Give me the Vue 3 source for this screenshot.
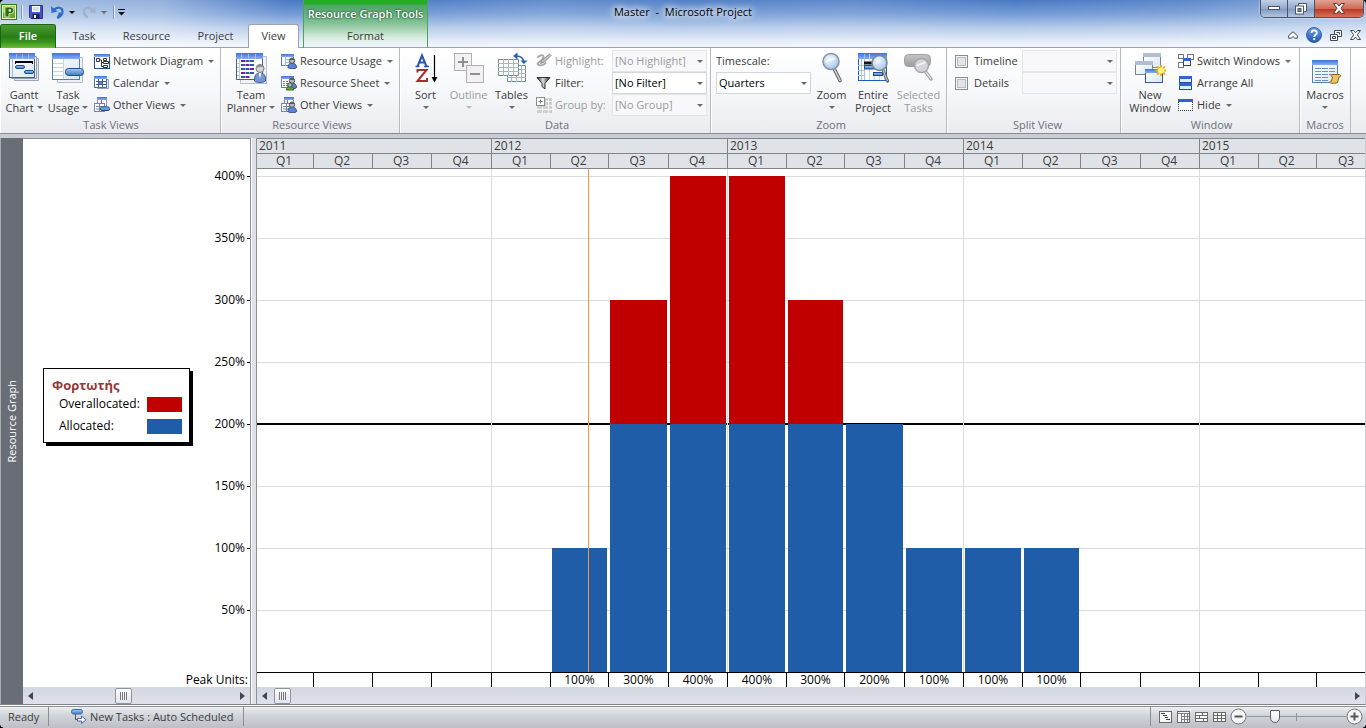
<script setup>
import { ref } from 'vue'

const zoomLevel = ref(26)
const timeline = ref(false)
const details = ref(false)

// One entry per visible quarter: label, relative width, peak units
const quarters = [
  { q: 'Q1', w: 57 },
  { q: 'Q2', w: 59 },
  { q: 'Q3', w: 59 },
  { q: 'Q4', w: 60, yearEnd: true },
  { q: 'Q1', w: 59 },
  { q: 'Q2', w: 58, peak: 100 },
  { q: 'Q3', w: 60, peak: 300 },
  { q: 'Q4', w: 59, peak: 400, yearEnd: true },
  { q: 'Q1', w: 59, peak: 400 },
  { q: 'Q2', w: 58, peak: 300 },
  { q: 'Q3', w: 60, peak: 200 },
  { q: 'Q4', w: 59, peak: 100, yearEnd: true },
  { q: 'Q1', w: 59, peak: 100 },
  { q: 'Q2', w: 58, peak: 100 },
  { q: 'Q3', w: 60 },
  { q: 'Q4', w: 59, yearEnd: true },
  { q: 'Q1', w: 59 },
  { q: 'Q2', w: 58 },
  { q: 'Q3', w: 48 }
]
const columns = quarters.map((c) => `minmax(0, ${c.w}fr)`).join(' ')
const years = [
  { y: 2011, span: 4 },
  { y: 2012, span: 4 },
  { y: 2013, span: 4 },
  { y: 2014, span: 4 },
  { y: 2015, span: 3 }
]
const levels = [400, 350, 300, 250, 200, 150, 100, 50]
const capacity = 200
const maxUnits = 400
const todayAt = 331 / 1108
const over = (p) => (Math.max(0, p - capacity) / maxUnits) * 100 + '%'
const within = (p) => (Math.min(capacity, p) / maxUnits) * 100 + '%'
</script>

<template>
  <div class="app">
    <svg class="defs" aria-hidden="true">
      <defs>
        <linearGradient id="gHead" x1="0" y1="0" x2="0" y2="1"><stop offset="0" stop-color="#3f73d8" /><stop offset="1" stop-color="#86aef2" /></linearGradient>
        <linearGradient id="gPage" x1="0" y1="0" x2="1" y2="1"><stop offset="0" stop-color="#ffffff" /><stop offset="1" stop-color="#dbe6f5" /></linearGradient>
        <linearGradient id="gPill" x1="0" y1="0" x2="0" y2="1"><stop offset="0" stop-color="#a9cbf0" /><stop offset="1" stop-color="#3f78c4" /></linearGradient>
        <radialGradient id="gLens" cx=".4" cy=".35" r=".7"><stop offset="0" stop-color="#f2f9ff" /><stop offset="1" stop-color="#9cc3ec" /></radialGradient>
        <linearGradient id="gGrey" x1="0" y1="0" x2="0" y2="1"><stop offset="0" stop-color="#c4c4c8" /><stop offset="1" stop-color="#9c9ca0" /></linearGradient>
        <linearGradient id="gFunnel" x1="0" y1="0" x2="1" y2="0"><stop offset="0" stop-color="#222" /><stop offset=".45" stop-color="#ddd" /><stop offset="1" stop-color="#222" /></linearGradient>
        <linearGradient id="gHelp" x1="0" y1="0" x2="0" y2="1"><stop offset="0" stop-color="#6fa0e6" /><stop offset="1" stop-color="#1f57b5" /></linearGradient>
        <g id="person">
          <path d="M.5 10c0-3 1.500-4.500 4-4.500S9 7 9 10c0 1.500-8.500 1.500-8.500 0z" fill="#5e86cf" stroke="#2d4f96" />
          <circle cx="4.500" cy="3.200" r="2.700" fill="#b4b6bb" stroke="#54575e" />
          <path d="M2 2.600C2.500.5 6 .2 7 2.200 5.500 2.800 4 2.500 2 2.600z" fill="#5b5e65" />
        </g>
        <g id="sheet16">
          <rect x=".5" y="1.500" width="12" height="11" fill="#fff" stroke="#5c7fae" />
          <rect x="0" y="1" width="13" height="3" fill="url(#gHead)" />
        </g>
      </defs>
    </svg>

    <header class="frame">
      <div class="qat">
        <svg class="i16" viewBox="0 0 16 16"><rect x=".5" y=".5" width="15" height="15" fill="#e9f5c8" stroke="#2f7d1b" /><rect x="2" y="2" width="12" height="12" fill="#a6d05a" /><path d="M2 9l12-4v9H2z" fill="#6aab25" /><path d="M4 3h5.500a3.300 3.300 0 0 1 0 6.600H8V13H4z" fill="#2c6b12" stroke="#eef8d8" stroke-width=".8" /><path d="M7.700 5.200H9a1.200 1.200 0 0 1 0 2.400H7.700z" fill="#eef8d8" /></svg>
        <i class="bar"></i>
        <button class="qb save" aria-label="Save"><svg class="i14" viewBox="0 0 14 14"><path d="M.5.5h13v13H2L.5 12z" fill="#4a52c0" stroke="#2c3490" /><rect x="3" y="1" width="8" height="6" fill="#f4f8ff" /><path d="M4 3h6M4 5h6" stroke="#b9c7e6" /><rect x="3.500" y="9" width="7" height="5" fill="#1d2360" /><rect x="5" y="10" width="2" height="3" fill="#fff" /></svg></button>
        <button class="qb undo" aria-label="Undo"><svg class="i14" viewBox="0 0 14 14"><path d="M3 5C6 1.500 11.500 2 11.500 6.500c0 3-2 5-5 6.500 1.500-2 2.500-4 2-5.500" fill="none" stroke="#2f6bc8" stroke-width="2.200" /><path d="M0 1l.5 7 6-1.500z" fill="#2f6bc8" /></svg></button>
        <i class="dn dark"></i>
        <button class="qb redo" aria-label="Redo" disabled><svg class="i14" viewBox="0 0 14 14"><path d="M10.500 5.500C8 1.500 2 2 2 6.500c0 3 2 5 4 6" fill="none" stroke="#a3b2ca" stroke-width="2.400" /><path d="M13.500 1.500v7l-6-1.500z" fill="#a3b2ca" /></svg></button>
        <i class="dn"></i>
        <i class="bar last"></i>
        <button class="qb more" aria-label="Customize Quick Access Toolbar"><svg width="8" height="7" viewBox="0 0 8 7"><path d="M0 .5h7" stroke="#111" /><path d="M0 3h7L3.500 6.500z" fill="#111" /></svg></button>
      </div>

      <div class="context">
        <div class="context-name">Resource Graph Tools</div>
        <button class="tab format">Format</button>
      </div>

      <h1 class="title">Master&nbsp; -&nbsp; Microsoft Project</h1>

      <div class="win">
        <button class="wb" aria-label="Minimize"><svg width="12" height="5" viewBox="0 0 12 5"><rect x=".5" y=".5" width="11" height="3" fill="#fff" stroke="#4a5568" /></svg></button>
        <button class="wb" aria-label="Restore"><svg width="12" height="12" viewBox="0 0 12 12"><path d="M3.500 2.500v-2h8v8h-2" fill="#fff" stroke="#4a5568" /><rect x=".5" y="3" width="8" height="8" fill="#fff" stroke="#4a5568" /><rect x="3" y="5.500" width="3" height="3" fill="#6d87b3" stroke="#4a5568" /></svg></button>
        <button class="wb close" aria-label="Close"><svg width="12" height="11" viewBox="0 0 12 11"><path d="M.5.5h3.300L6 3 8.200.5h3.300L8 5.300l3.500 5H8.200L6 7.700l-2.200 2.600H.5L4 5.300z" fill="#fff" stroke="#5b3434" /></svg></button>
      </div>

      <nav class="tabs">
        <button class="tab file">File</button>
        <button class="tab t-task">Task</button>
        <button class="tab t-wide">Resource</button>
        <button class="tab t-wide">Project</button>
        <button class="tab view">View</button>
      </nav>

      <div class="aux">
        <button class="ab" aria-label="Minimize the Ribbon"><svg width="10" height="8" viewBox="0 0 10 8"><path d="M.7 4.500L5 .8l4.300 3.700v2.700H6.800L5 5.500 3.200 7.200H.7z" fill="#fff" stroke="#3e4a5c" /></svg></button>
        <button class="ab" aria-label="Help"><svg width="16" height="16" viewBox="0 0 16 16"><circle cx="8" cy="8" r="7.500" fill="url(#gHelp)" stroke="#3a62a8" /><path d="M5.500 6c0-3.500 5.300-3.300 5.300-.3C10.800 7.800 8.200 7.800 8.200 10" fill="none" stroke="#fff" stroke-width="1.800" /><rect x="7.200" y="11.200" width="2" height="2" fill="#fff" /></svg></button>
        <button class="ab" aria-label="Restore Window"><svg width="12" height="11" viewBox="0 0 12 11"><path d="M4.500.5h7v6h-7z" fill="#fff" stroke="#3e4a5c" /><path d="M6.500 2.500h3v2" fill="none" stroke="#3e4a5c" /><path d="M.5 4.500h7v6h-7z" fill="#fff" stroke="#3e4a5c" /><path d="M2.500 6.500h3v2h-3z" fill="none" stroke="#3e4a5c" /></svg></button>
        <button class="ab" aria-label="Close Window"><svg width="11" height="10" viewBox="0 0 11 10"><path d="M.5.5h3l2 2.300 2-2.300h3L7.300 4.800l3.200 4.700h-3l-2-2.500-2 2.500h-3l3.200-4.700z" fill="#fff" stroke="#3e4a5c" /></svg></button>
      </div>
    </header>

    <section class="ribbon">
      <div class="group g-task">
        <div class="body">
          <button class="big w44">
            <svg class="i32" viewBox="0 0 32 32"><path d="M6.500 6.500h24v22h-24z" fill="#e6eaf0" stroke="#9aa5b5" /><path d="M3.500 4.500h25v22h-25z" fill="#eef1f6" stroke="#8f9cb0" /><rect x="1.500" y="1.500" width="25" height="24" fill="url(#gPage)" stroke="#44618f" /><rect x="1" y="1" width="26" height="6" fill="url(#gHead)" /><path d="M4.500 7v18M8.500 2v5M14.500 2v5M20.500 2v5" stroke="#9fb8dd" /><path d="M7 9h18v3h-1v-1H8v1H7z" fill="#000" /><rect x="7.500" y="13.500" width="9" height="3" rx="1.500" fill="url(#gPill)" stroke="#1f4f93" /><rect x="16.500" y="18.500" width="9" height="3" rx="1.500" fill="url(#gPill)" stroke="#1f4f93" /></svg>
            <span>Gantt<br />Chart <i class="dn"></i></span>
          </button>
          <button class="big w44">
            <svg class="i32" viewBox="0 0 32 32"><path d="M5.500 5.500h25v25h-25z" fill="#eef1f6" stroke="#b5bfcd" /><rect x=".5" y="1.500" width="27" height="26" fill="url(#gPage)" stroke="#5d7dab" /><rect x="0" y="1" width="28" height="6" fill="url(#gHead)" /><rect x="1" y="7" width="10" height="20" fill="#fff" /><path d="M11.500 7v20M1 11.500h10M1 15.500h10M1 19.500h10M1 23.500h10" stroke="#c6d4ea" /><rect x="13.500" y="16.500" width="18" height="7" rx="3" fill="url(#gPill)" stroke="#1f4f93" /></svg>
            <span>Task<br />Usage <i class="dn"></i></span>
          </button>
          <div class="smalls">
            <button class="small"><svg class="i16" viewBox="0 0 16 16"><rect x=".5" y="1.500" width="15" height="14" fill="#fff" stroke="#1f4f93" /><rect x="0" y="1" width="16" height="3" fill="url(#gHead)" /><path d="M2.500 5.500h3v3h-3zM9.500 5.500h3v2h-3zM9.500 8.500h5v2h-5zM9.500 12.500h4v2h-4zM5.500 7h2v6.500h2M7.500 9.500h2" fill="none" stroke="#333" /></svg><span>Network Diagram</span><i class="dn"></i></button>
            <button class="small"><svg class="i16" viewBox="0 0 16 16"><path d="M3.500 4.500h11v9h-11z" fill="#e6ebf3" stroke="#8fa2bf" /><rect x=".5" y="1.500" width="12" height="11" fill="#fff" stroke="#4d6fa0" /><rect x="0" y="1" width="13" height="3" fill="url(#gHead)" /><path d="M2 6.500h10M2 9.500h10M4.500 4v8M8.500 4v8" stroke="#3a5f98" /><rect x="5" y="7" width="3" height="2" fill="#5d8bdc" /></svg><span>Calendar</span><i class="dn"></i></button>
            <button class="small"><svg class="i16" viewBox="0 0 16 16"><rect x="3.500" y=".5" width="9" height="9" fill="#fff" stroke="#6f95d4" /><rect x="3" y="0" width="10" height="3" fill="url(#gHead)" /><path d="M7.500 3v3" stroke="#d43bb0" /><rect x=".5" y="6.500" width="10" height="8" fill="#fff" stroke="#6f87aa" /><path d="M2 9.500h8M2 12h8M5.500 7v7" stroke="#6f87aa" /><rect x="6.500" y="10" width="9" height="3.500" rx="1.500" fill="url(#gPill)" stroke="#1f4f93" /></svg><span>Other Views</span><i class="dn"></i></button>
          </div>
        </div>
        <div class="caption">Task Views</div>
      </div>

      <div class="group g-res">
        <div class="body">
          <button class="big w52">
            <svg class="i32" viewBox="0 0 32 32"><path d="M5.500 4.500h26v27h-26z" fill="#f0f2f6" stroke="#b5bfcd" /><rect x="1.500" y="1.500" width="26" height="26" fill="#fff" stroke="#44618f" /><rect x="1" y="1" width="27" height="6" fill="url(#gHead)" /><path d="M6.500 2v5M13.500 2v5M20.500 2v5" stroke="#a7c1ee" /><path d="M2 11.500h3M2 15.500h3M2 19.500h3M2 23.500h3M4.500 7v20" stroke="#b8cae6" /><path d="M6 9h4M10.500 13h4M15 17h4M6 21h4M10.500 25h4" stroke="#7a1aa8" stroke-width="2" /><path d="M10.500 9h4M15 9h4M6 13h4M15 13h4M6 17h4M10.500 17h4M10.500 21h4M15 21h4M6 25h4" stroke="#2d5a9c" stroke-width="2" /><path d="M19.500 29c-.5-6 2-8 5.500-8s6 2 5.500 8c-2 2-9 2-11 0z" fill="#7796d2" stroke="#3c5c9e" /><path d="M23.500 20.500h3l-1.500 6z" fill="#fff" /><circle cx="25" cy="16.500" r="4" fill="#d5d6d8" stroke="#74777d" /><path d="M21 15.500c1-4 7-4 8 0-3-1-5 0-8 0z" fill="#8b8e94" /></svg>
            <span>Team<br />Planner <i class="dn"></i></span>
          </button>
          <div class="smalls">
            <button class="small"><svg class="i16" viewBox="0 0 16 16"><use href="#sheet16" /><path d="M4.500 4v9M5 6.500h8M5 9.500h8" stroke="#a5bede" /><use href="#person" x="6.500" y="4.500" /></svg><span>Resource Usage</span><i class="dn"></i></button>
            <button class="small"><svg class="i16" viewBox="0 0 16 16"><use href="#sheet16" /><path d="M2 6.500h10M2 8.500h10M2 10.500h6" stroke="#777" stroke-dasharray="2 1" /><use href="#person" x="6.500" y="2.500" /><path d="M5.500 15c0-3 1.500-3.500 3.500-3.500s3.500.5 3.500 3.500z" fill="#5faa3f" stroke="#2c6b1c" /><circle cx="9" cy="10" r="2.200" fill="#bbb" stroke="#444" /></svg><span>Resource Sheet</span><i class="dn"></i></button>
            <button class="small"><svg class="i16" viewBox="0 0 16 16"><rect x="3.500" y=".5" width="9" height="9" fill="#fff" stroke="#6f95d4" /><rect x="3" y="0" width="10" height="3" fill="url(#gHead)" /><path d="M6.500 3v3" stroke="#d43bb0" /><rect x=".5" y="6.500" width="10" height="8" fill="#fff" stroke="#6f87aa" /><path d="M2 9.500h8M2 12h8M5.500 7v7" stroke="#6f87aa" /><use href="#person" x="6.500" y="4.500" /></svg><span>Other Views</span><i class="dn"></i></button>
          </div>
        </div>
        <div class="caption">Resource Views</div>
      </div>

      <div class="group g-data">
        <div class="body">
          <button class="big w43">
            <svg class="i32" viewBox="0 0 32 32"><path d="M7.500 14.500l4.500-11 4.500 11M9.500 10.500h5.500" fill="none" stroke="#2d56a6" stroke-width="2" /><path d="M5.500 14.500h4M14 14.500h5" stroke="#2d56a6" stroke-width="1.400" /><path d="M7.500 20.500v-2.500h9L7.500 29h9.500v-3" fill="none" stroke="#a3302c" stroke-width="2" /><path d="M24.500 3v24" stroke="#000" stroke-width="1.200" /><path d="M21.500 25h6l-3 5.500z" fill="#000" /></svg>
            <span>Sort</span><i class="dn"></i>
          </button>
          <button class="big w43" disabled>
            <svg class="i32" viewBox="0 0 32 32"><rect x="1.500" y="1.500" width="17" height="17" fill="#f2f0f2" stroke="#b2b0b4" /><path d="M10 5v10M5 10h10" stroke="#8f8f93" stroke-width="2" /><rect x="13.500" y="13.500" width="17" height="17" fill="#f2f0f2" stroke="#b2b0b4" /><path d="M17 22h10" stroke="#8f8f93" stroke-width="2" /></svg>
            <span>Outline</span><i class="dn"></i>
          </button>
          <button class="big w43">
            <svg class="i32" viewBox="0 0 32 32"><path d="M11.500 13.500h18v16h-18z" fill="#fff" stroke="#6d88b0" /><path d="M11 17.500h19M11 21.500h19M11 25.500h19M15.500 13v17M20.500 13v17M25.500 13v17" stroke="#a3b6d2" /><path d="M2.500 7.500h20v16h-20z" fill="#fff" stroke="#6d88b0" /><path d="M2 11.500h21M2 15.500h21M2 19.500h21M7.500 7v17M12.500 7v17M17.500 7v17" stroke="#a3b6d2" /><path d="M20 4c5 0 7.500 2 7.500 6" fill="none" stroke="#2c5cae" stroke-width="1.600" /><path d="M17 4l4.500-3.500v7zM24.500 8.500h7L28 12z" fill="#2c5cae" /></svg>
            <span>Tables</span><i class="dn"></i>
          </button>
          <div class="fields">
            <div class="field off">
              <svg class="i16" viewBox="0 0 16 16"><path d="M1.500 4.500c4-4 8-2 5 1.500S.5 10 2 11.500s6 1 8-2" fill="none" stroke="#a6a6a6" stroke-width="1.800" /><path d="M13.500 1l1.500 1.500L8.500 9l-4 1.500L6 7z" fill="#c2c2c2" stroke="#8c8c8c" /></svg>
              <label for="f-high">Highlight:</label>
              <span class="sel"><select id="f-high" disabled><option>[No Highlight]</option></select><i class="dn"></i></span>
            </div>
            <div class="field">
              <svg class="i16" viewBox="0 0 16 16"><path d="M1 2.500h13L9 8.500v5.500l-3-2.500v-3z" fill="url(#gFunnel)" stroke="#333" /></svg>
              <label for="f-filter">Filter:</label>
              <span class="sel"><select id="f-filter"><option>[No Filter]</option></select><i class="dn"></i></span>
            </div>
            <div class="field off">
              <svg class="i16" viewBox="0 0 16 16"><path d="M9 1h7v15H1V9h8z" fill="#cfcfcf" /><path d="M10 4.500h6M10 8.500h6M1 12.500h15M6.500 10v6M12.500 2v14" stroke="#f6f6f6" /><rect x=".5" y=".5" width="8" height="8" fill="#fff" stroke="#8c8c8c" /><path d="M4.500 2.500v4M2.500 4.500h4" stroke="#777" /></svg>
              <label for="f-group">Group by:</label>
              <span class="sel"><select id="f-group" disabled><option>[No Group]</option></select><i class="dn"></i></span>
            </div>
          </div>
        </div>
        <div class="caption">Data</div>
      </div>

      <div class="group g-zoom">
        <div class="body">
          <div class="stack">
            <label for="f-scale">Timescale:</label>
            <span class="sel"><select id="f-scale"><option>Quarters</option></select><i class="dn"></i></span>
          </div>
          <button class="big w41">
            <svg class="i32" viewBox="0 0 32 32"><path d="M18.500 17.500l5.500 11" stroke="#66696f" stroke-width="3.600" stroke-linecap="round" /><path d="M18.500 17.500l5.500 11" stroke="#d0d2d6" stroke-width="1.500" stroke-linecap="round" /><circle cx="15" cy="9.500" r="8" fill="url(#gLens)" stroke="#8a9099" stroke-width="1.500" /><path d="M10 10c2-3 6-1 9-4" fill="none" stroke="#fff" stroke-width="1.500" /></svg>
            <span>Zoom</span><i class="dn"></i>
          </button>
          <button class="big w42">
            <svg class="i32" viewBox="0 0 32 32"><rect x="1.500" y="1.500" width="28" height="27" fill="#fff" stroke="#1f5cc4" /><rect x="1" y="1" width="29" height="6" fill="url(#gHead)" /><path d="M1 13.500h6M1 18.500h6M1 23.500h6M4.500 7v21M7.500 2v26" stroke="#a5c1ee" /><path d="M12.500 2v26M17.500 20v8M22.500 20v8M27.500 20v8" stroke="#c5d5ef" /><path d="M7 9.500h9v3H7z" fill="#111" /><rect x="7.500" y="13.500" width="10" height="3.500" fill="url(#gPill)" stroke="#1f4f93" /><rect x="16.500" y="20.500" width="9" height="3" fill="url(#gPill)" stroke="#1f4f93" /><path d="M26 18l4.500 11" stroke="#5c5f65" stroke-width="3.200" stroke-linecap="round" /><path d="M26 18l4.500 11" stroke="#c8cace" stroke-width="1.200" /><circle cx="22.500" cy="11" r="7.500" fill="url(#gLens)" stroke="#7e8690" stroke-width="1.500" /></svg>
            <span>Entire<br />Project</span>
          </button>
          <button class="big w49" disabled>
            <svg class="i32" viewBox="0 0 32 32"><rect x="1.500" y="2.500" width="26" height="12" rx="4" fill="url(#gGrey)" stroke="#a2a2a6" /><path d="M22 19l6 8" stroke="#a6a6aa" stroke-width="3.500" stroke-linecap="round" /><path d="M22 19l6 8" stroke="#ededef" stroke-width="1.200" /><circle cx="18.500" cy="13.500" r="7" fill="#d5d5d8" stroke="#a6a6aa" stroke-width="1.500" /><path d="M14 14c2-3 6-1 8-4" fill="none" stroke="#f4f4f4" stroke-width="1.500" /></svg>
            <span>Selected<br />Tasks</span>
          </button>
        </div>
        <div class="caption">Zoom</div>
      </div>

      <div class="group g-split">
        <div class="body">
          <div class="fields">
            <div class="field"><input id="c-time" v-model="timeline" type="checkbox" /><label for="c-time">Timeline</label><span class="sel"><select aria-label="Timeline view" disabled></select><i class="dn"></i></span></div>
            <div class="field"><input id="c-det" v-model="details" type="checkbox" /><label for="c-det">Details</label><span class="sel"><select aria-label="Details view" disabled></select><i class="dn"></i></span></div>
          </div>
        </div>
        <div class="caption">Split View</div>
      </div>

      <div class="group g-win">
        <div class="body">
          <button class="big w52">
            <svg class="i32" viewBox="0 0 32 32"><rect x="9.500" y="1.500" width="17" height="14" fill="url(#gPage)" stroke="#76849a" /><rect x="9" y="1" width="18" height="4" fill="#b3bdce" /><rect x="1.500" y="9.500" width="17" height="13" fill="url(#gPage)" stroke="#76849a" /><rect x="1" y="9" width="18" height="4" fill="#b3bdce" /><rect x="11.500" y="17.500" width="17" height="13" fill="url(#gPage)" stroke="#3a5f98" /><rect x="11" y="17" width="18" height="4" fill="url(#gHead)" /><path d="M27 13v11M21.500 18.500h11M23 14.500l8 8M31 14.500l-8 8" stroke="#f5b300" stroke-width="2" /><circle cx="27" cy="18.500" r="3" fill="#fff58a" /></svg>
            <span>New<br />Window</span>
          </button>
          <div class="smalls">
            <button class="small"><svg class="i16" viewBox="0 0 16 16"><rect x=".5" y="1.500" width="5" height="4" fill="#fff" stroke="#777" /><rect x="9.500" y="1.500" width="6" height="5" fill="#fff" stroke="#777" /><rect x=".5" y="9.500" width="5" height="5" fill="#fff" stroke="#777" /><rect x="5.500" y="5.500" width="7" height="7" fill="#fff" stroke="#24437c" /><rect x="5" y="5" width="8" height="3" fill="#2d64cf" /></svg><span>Switch Windows</span><i class="dn"></i></button>
            <button class="small"><svg class="i16" viewBox="0 0 16 16"><rect x="1.500" y="1.500" width="12" height="6" fill="#dfeafa" stroke="#24509a" /><rect x="1" y="1" width="13" height="3" fill="#2d64cf" /><rect x="1.500" y="8.500" width="12" height="6" fill="#dfeafa" stroke="#24509a" /><rect x="1" y="8" width="13" height="3" fill="#2d64cf" /></svg><span>Arrange All</span></button>
            <button class="small"><svg class="i16" viewBox="0 0 16 16"><rect x="1" y="4" width="13" height="9" fill="#fff" /><path d="M.5 5v9M14.500 5v9M0 13.500h15" stroke="#444" stroke-dasharray="1 1" /><rect x="0" y="2" width="15" height="3" fill="#2d64cf" /></svg><span>Hide</span><i class="dn"></i></button>
          </div>
        </div>
        <div class="caption">Window</div>
      </div>

      <div class="group g-mac">
        <div class="body">
          <button class="big w50">
            <svg class="i32" viewBox="0 0 32 32"><rect x="3.500" y="8.500" width="25" height="22" fill="url(#gPage)" stroke="#5d7dab" /><rect x="3" y="8" width="26" height="5" fill="url(#gHead)" /><path d="M6 16.500h20M6 19.500h20M6 22.500h20M6 25.500h14M6 28.500h14" stroke="#6f8fc0" stroke-dasharray="6 1" /><path d="M23 22.500h7.500c1.500 0 1.500 2.500-.5 2.500l-1.500 5.500c-.5 1-8 1-8 0s1-1.500 2-1.500l1-4c-1.500 0-2-2.500-.5-2.500z" fill="#eac564" stroke="#8a6412" /></svg>
            <span>Macros</span><i class="dn"></i>
          </button>
        </div>
        <div class="caption">Macros</div>
      </div>
    </section>

    <main class="work">
      <aside class="viewname"><span>Resource Graph</span></aside>

      <section class="left">
        <div class="leftplot">
          <div class="legend">
            <h2>Φορτωτής</h2>
            <div class="key"><span>Overallocated:</span><i class="sw red"></i></div>
            <div class="key"><span>Allocated:</span><i class="sw blue"></i></div>
          </div>
          <div class="axis">
            <div v-for="l in levels" :key="l" class="lvl"><span>{{ l }}%</span><i></i></div>
          </div>
        </div>
        <div class="peaklabel">Peak Units:</div>
        <div class="scroll">
          <button class="arr l" aria-label="Scroll left"></button>
          <i class="thumb mid"></i>
          <button class="arr r" aria-label="Scroll right"></button>
        </div>
      </section>

      <div class="splitter"></div>

      <section class="chart">
        <div class="row years" :style="{ gridTemplateColumns: columns }">
          <div v-for="y in years" :key="y.y" :style="{ gridColumn: 'span ' + y.span }">{{ y.y }}</div>
        </div>
        <div class="row quarters" :style="{ gridTemplateColumns: columns }">
          <div v-for="(c, i) in quarters" :key="i">{{ c.q }}</div>
        </div>
        <div class="plot">
          <div class="lines"><div v-for="l in levels" :key="l" :class="{ cap: l === capacity }"></div></div>
          <div class="cols" :style="{ gridTemplateColumns: columns }">
            <div v-for="(c, i) in quarters" :key="i" class="col" :class="{ yr: c.yearEnd }">
              <template v-if="c.peak">
                <div class="over" :style="{ height: over(c.peak) }"></div>
                <div class="alloc" :style="{ height: within(c.peak) }"></div>
              </template>
            </div>
          </div>
          <div class="today" :style="{ marginLeft: todayAt * 100 + '%' }"></div>
        </div>
        <div class="row peaks" :style="{ gridTemplateColumns: columns }">
          <div v-for="(c, i) in quarters" :key="i">{{ c.peak ? c.peak + '%' : '' }}</div>
        </div>
        <div class="scroll">
          <button class="arr l" aria-label="Scroll left"></button>
          <i class="thumb"></i>
          <button class="arr r" aria-label="Scroll right"></button>
        </div>
      </section>
    </main>

    <footer class="status">
      <span class="ready">Ready</span>
      <button class="mode"><svg class="i16" viewBox="0 0 16 16"><rect x=".5" y=".5" width="11" height="4.500" rx="2" fill="url(#gPill)" stroke="#3a6cb8" /><path d="M4.500 5v5.500h2" fill="none" stroke="#555" /><path d="M6.500 9.500h4V7l4.500 3.800-4.500 3.700V12h-4z" fill="#fff" stroke="#4a68ac" /></svg>New Tasks : Auto Scheduled</button>
      <div class="views">
        <button aria-label="Gantt Chart"><svg width="13" height="12" viewBox="0 0 13 12"><rect x=".5" y=".5" width="12" height="11" fill="#f7f7f7" stroke="#6a6a6a" /><path d="M2 2.500h4M4 4.500h4M6 6.500h3M7 8.500h4" stroke="#444" /></svg></button>
        <button aria-label="Task Usage"><svg width="13" height="12" viewBox="0 0 13 12"><rect x=".5" y=".5" width="12" height="11" fill="#f7f7f7" stroke="#6a6a6a" /><path d="M1 2.500h11M4.500 3v8M7.500 3v8M10.500 3v8M4 5.500h8M4 8.500h8" stroke="#808080" /></svg></button>
        <button aria-label="Team Planner"><svg width="13" height="12" viewBox="0 0 13 12"><rect x=".5" y="1.500" width="12" height="9" fill="#f7f7f7" stroke="#6a6a6a" /><path d="M0 4.500h13M0 7.500h13M7.500 1v3M4.500 5v3M8.500 8v3" stroke="#6a6a6a" /></svg></button>
        <button aria-label="Resource Sheet"><svg width="13" height="12" viewBox="0 0 13 12"><rect x=".5" y="1.500" width="12" height="9" fill="#f7f7f7" stroke="#6a6a6a" /><path d="M1 4.500h11M1 7.500h11M4.500 2v9M8.500 2v9" stroke="#6a6a6a" /></svg></button>
      </div>
      <div class="zoomer">
        <button aria-label="Zoom out"><svg width="17" height="17" viewBox="0 0 17 17"><circle cx="8.500" cy="8.500" r="7.500" fill="#f4f5f7" stroke="#6f747c" /><path d="M4.500 8.500h8" stroke="#555" stroke-width="2" /></svg></button>
        <input v-model="zoomLevel" type="range" min="0" max="100" aria-label="Zoom level" />
        <button aria-label="Zoom in"><svg width="17" height="17" viewBox="0 0 17 17"><circle cx="8.500" cy="8.500" r="7.500" fill="#f4f5f7" stroke="#6f747c" /><path d="M4.500 8.500h8M8.500 4.500v8" stroke="#555" stroke-width="2" /></svg></button>
      </div>
    </footer>
  </div>
</template>

<style>
html { background: #000; }
body { margin: 0; }
</style>

<style scoped>
* { box-sizing: border-box; }
.app { min-height: 100vh; display: flex; flex-direction: column; font: 11px/14px "Open Sans", "Noto Sans", sans-serif; color: #3b3b3b; background: #fff; border-radius: 5px; overflow: hidden; }
button { font: inherit; color: inherit; background: none; border: 0; padding: 0; margin: 0; }
i { font-style: normal; }
svg { display: block; flex: none; }
.defs { position: absolute; width: 0; height: 0; }
.i14 { width: 14px; height: 14px; }
.i16 { width: 16px; height: 16px; }
.i32 { width: 32px; height: 32px; }
.dn { display: inline-block; flex: none; width: 0; height: 0; border: 3px solid transparent; border-top: 3px solid #6a6a6a; border-bottom: 0; }
.dn.dark { border-top-color: #111; }

/* title bar and tabs */
.frame { display: grid; grid-template-columns: 303px 125px 1fr auto; grid-template-rows: 24px 24px; background: linear-gradient(100deg, rgba(255,255,255,.5) 0, rgba(255,255,255,.4) 12%, rgba(255,255,255,0) 21%, rgba(255,255,255,0) 27%, rgba(255,255,255,.15) 40%, rgba(255,255,255,.05) 50%, rgba(255,255,255,.12) 62%, rgba(255,255,255,0) 74%, rgba(255,255,255,.1) 86%, rgba(255,255,255,.4) 100%), linear-gradient(#4a7ac4 0, #739bd6 14px, #b5cbea 28px, #edf2fa 44px, #f0f4fa 48px); box-shadow: inset 0 -1px #9aa2b0; }
.qat { grid-area: 1 / 1; display: flex; align-items: center; padding-left: 1px; }
.bar { width: 2px; height: 14px; background: #8296b8; border-right: 1px solid #e3ecf8; margin-left: 4px; }
.save { margin-left: 6px; }
.undo { margin-left: 8px; margin-right: 4px; }
.redo { margin-left: 7px; margin-right: 5px; }
.bar.last { margin-left: 6px; }
.more { margin-left: 3px; }
.context { grid-area: 1 / 2 / 3 / 3; display: flex; flex-direction: column; border: solid #4da458; border-width: 0 1px; background: linear-gradient(#22ad22 0, #22ad22 4px, #4aa565 5px, #7fbf92 22px, #d9eee0 38px, #eff4f9 46px); box-shadow: inset 0 -1px #9aa2b0; }
.context-name { height: 24px; padding-top: 7px; text-align: center; font-weight: 600; color: #fff; text-shadow: 0 0 2px #1d5a32, 0 0 2px #1d5a32; white-space: nowrap; }
.title { grid-area: 1 / 1 / 2 / 5; justify-self: center; align-self: center; margin: 0; font-size: 11px; font-weight: 400; color: #000; text-shadow: 0 0 6px #fff, 0 0 8px #fff, 0 0 10px #fff; }
.win { grid-area: 1 / 4; display: flex; justify-self: end; align-self: start; height: 18px; margin-right: 2px; border: 1px solid #46556e; border-top: 0; border-radius: 0 0 5px 5px; overflow: hidden; box-shadow: 0 0 2px #fff; }
.wb { width: 27px; display: flex; align-items: center; justify-content: center; background: linear-gradient(#c3d0e6, #93a8cb 50%, #7f97c0 51%, #b3c5e2); border-right: 1px solid #46556e; }
.wb.close { width: 48px; background: linear-gradient(#e2a394, #cf6a56 50%, #b93520 51%, #d9705a); border: 0; }
.tabs { grid-area: 2 / 1; display: flex; }
.tab { height: 24px; padding-bottom: 1px; text-align: center; }
.file { width: 56px; border: 1px solid #1c6312; border-bottom: 0; border-radius: 3px 3px 0 0; color: #fff; font-weight: 600; background: linear-gradient(#4c9a35, #2a7d17 50%, #3a9420 75%, #6abf32); }
.t-task { width: 56px; }
.t-wide { width: 69px; }
.view { width: 51px; margin-left: -2px; border: 1px solid #9aa2b0; border-bottom: 0; border-radius: 3px 3px 0 0; background: #fff; }
.aux { grid-area: 2 / 4; display: flex; align-items: center; justify-content: flex-end; gap: 8px; padding: 0 5px 2px 0; }

/* ribbon */
.ribbon { display: flex; height: 86px; background: linear-gradient(#fff, #f7f8fa 50%, #e9ebf0); border-bottom: 1px solid #878b92; }
.group { flex: none; display: flex; flex-direction: column; border-right: 1px solid #b7babf; box-shadow: inset 1px 0 #fff; }
.g-task { width: 221px; padding-left: 2px; }
.g-res { width: 179px; padding-left: 4px; }
.g-data { width: 311px; padding-left: 4px; }
.g-zoom { width: 236px; padding-left: 5px; }
.g-split { width: 174px; padding-left: 8px; }
.g-win { width: 179px; padding-left: 3px; }
.g-mac { width: 51px; }
.body { flex: 1; display: flex; }
.caption { height: 15px; text-align: center; color: #6d717a; }
.big { display: flex; flex-direction: column; align-items: center; padding-top: 4px; line-height: 13px; white-space: nowrap; }
.big > span { margin-top: 4px; }
.big > .dn { margin-top: 5px; }
.big span .dn { margin: 0 0 3px 0; }
.w41 { width: 41px; }
.w42 { width: 42px; }
.w43 { width: 43px; }
.w44 { width: 44px; }
.w49 { width: 49px; }
.w50 { width: 50px; }
.w52 { width: 52px; }
.big:disabled, .off label { color: #9b9ba0; }
.big:disabled .dn { opacity: .4; }
.smalls { display: flex; flex-direction: column; padding: 2px 0 0 4px; }
.g-win .smalls { padding-left: 2px; }
.small { display: flex; align-items: center; height: 22px; gap: 3px; white-space: nowrap; }
.small .dn { margin-left: 2px; }
.fields { display: flex; flex-direction: column; padding: 2px 0 0 3px; }
.field { display: flex; align-items: center; height: 22px; }
.g-data label { width: 57px; margin-left: 3px; }
.g-split .fields { padding-left: 0; }
.g-split label { width: 48px; margin-left: 6px; }
.field input { appearance: none; width: 13px; height: 13px; margin: 0; border: 1px solid #8a8d92; background: #e2e4e7; box-shadow: inset 0 0 0 1px #f5f5f5, inset 0 0 0 2px #b9bcc1; }
.field input:checked { background: #3a5f98; }
.sel { display: grid; align-items: center; width: 95px; height: 22px; }
.sel > * { grid-area: 1 / 1; }
.sel select { appearance: none; width: 95px; height: 22px; padding: 0 0 0 2px; border: 1px solid #d3d6dc; border-radius: 0; background: #fff; font: inherit; color: #000; opacity: 1; }
.sel select:disabled { background: #f8f8fa; border-color: #e3e5ea; color: #9b9ba0; }
.sel .dn { justify-self: end; margin-right: 4px; pointer-events: none; }
.stack { display: flex; flex-direction: column; padding-top: 2px; }
.stack label { height: 22px; line-height: 22px; }

/* work area */
.work { flex: 1; display: flex; border-top: 4px solid #c9ccd2; border-right: 1px solid #c9ccd2; border-bottom: 1px solid #7e838b; }
.viewname { width: 23px; display: flex; align-items: center; justify-content: center; background: #696d76; border-left: 1px solid #a9acb1; color: #fff; }
.viewname span { writing-mode: vertical-rl; transform: rotate(180deg); }
.left { flex: none; width: 228px; display: flex; flex-direction: column; border: 1px solid #8d9198; border-width: 1px 1px 0 0; color: #000; font-size: 12px; }
.leftplot { flex: 1; display: flex; justify-content: space-between; padding-left: 20px; }
.legend { align-self: center; width: 147px; height: 75px; padding: 8px 7px 0 8px; border: 1px solid #000; box-shadow: 3px 3px #000; }
.legend h2 { margin: 0; font-size: 13px; line-height: 16px; font-weight: 700; color: #953735; }
.key { display: flex; justify-content: space-between; align-items: center; height: 22px; padding-left: 7px; white-space: nowrap; }
.sw { width: 35px; height: 15px; }
.red, .over { background: #c00000; }
.blue, .alloc { background: #1f5da8; }
.axis { width: 50px; margin-top: 37px; display: grid; grid-template-rows: repeat(8, 1fr); }
.lvl { display: flex; justify-content: flex-end; align-items: flex-start; gap: 2px; }
.lvl span { margin-top: -7px; }
.lvl i { width: 3px; height: 1px; background: #000; }
.peaklabel { height: 15px; line-height: 16px; padding-right: 2px; text-align: right; }
.splitter { flex: none; width: 6px; background: #dfe1e8; border-left: 1px solid #fff; border-right: 1px solid #8d9198; }
.chart { flex: 1; min-width: 0; display: flex; flex-direction: column; font-size: 12px; }
.row { display: grid; }
.years > div, .quarters > div { height: 15px; background: #dfe3e8; border: solid #80848a; border-width: 0 1px 1px 0; line-height: 14px; }
.years { border-top: 1px solid #80848a; }
.years > div { padding-left: 2px; }
.years > div:last-child, .quarters > div:last-child { border-right: 0; }
.quarters > div { text-align: center; padding-right: 2px; }
.quarters > div:last-child { padding: 0 0 0 10px; }
.plot { flex: 1; display: grid; border-bottom: 1px solid #000; }
.plot > div { grid-area: 1 / 1; }
.lines { margin-top: 7px; display: grid; grid-template-rows: repeat(8, 1fr); }
.lines > div { border-top: 1px solid #dcdcdc; }
.lines > .cap { border-top: 2px solid #000; margin-top: -1px; }
.cols { display: grid; }
.col { border-right: 1px solid transparent; padding: 7px 1px 0; display: flex; flex-direction: column; justify-content: flex-end; }
.col.yr { border-right-color: #dcdcdc; }
.over, .alloc { flex: none; }
.today { width: 1px; background: #f79646; }
.peaks { color: #000; }
.peaks > div { height: 14px; line-height: 14px; text-align: center; border-right: 1px solid #000; }
.peaks > div:last-child { border-right: 0; }
.scroll { flex: none; height: 17px; display: flex; align-items: center; padding: 0 5px 0 5px; background: linear-gradient(#d3d7df, #dfe2ea); }
.arr { width: 0; height: 0; border: 4px solid transparent; }
.arr.l { border-right: 5px solid #42474f; border-left: 0; }
.arr.r { border-left: 5px solid #42474f; border-right: 0; margin-left: auto; }
.thumb { width: 17px; height: 16px; margin-left: 7px; border: 1px solid #8e949d; border-radius: 2px; background: linear-gradient(90deg, #777 1px, transparent 1px) 4px 3px / 2px 8px no-repeat, linear-gradient(90deg, #777 1px, transparent 1px) 6px 3px / 2px 8px no-repeat, linear-gradient(90deg, #777 1px, transparent 1px) 8px 3px / 2px 8px no-repeat, linear-gradient(90deg, #777 1px, transparent 1px) 10px 3px / 2px 8px no-repeat, linear-gradient(#fafbfc, #e3e6ec); }
.thumb.mid { margin-left: 82px; }

/* status bar */
.status { display: flex; align-items: center; height: 23px; background: linear-gradient(#fff 0, #fff 1px, #8a8e95 1px, #8a8e95 2px, #edeff2 2px, #d2d5da 10px, #bcc0c6); }
.ready { width: 49px; padding-left: 8px; height: 19px; line-height: 19px; border-right: 1px solid #8a8e95; }
.mode { display: flex; align-items: center; gap: 3px; width: 195px; height: 19px; padding-left: 22px; border-right: 1px solid #8a8e95; white-space: nowrap; }
.views { display: flex; align-items: center; gap: 5px; height: 19px; margin-left: auto; padding-left: 8px; border-left: 1px solid #8a8e95; }
.zoomer { display: flex; align-items: center; padding: 0 3px 0 4px; }
.zoomer input { appearance: none; width: 99px; height: 16px; margin: 0; background: linear-gradient(#8f949e, #8f949e) 49px 50% / 1px 8px no-repeat, linear-gradient(#8f949e, #8f949e) 0 50% / 100% 1px no-repeat; }
.zoomer input::-webkit-slider-thumb { appearance: none; width: 10px; height: 13px; background: linear-gradient(#fff, #e3e6ec); border: 1px solid #5a616b; border-radius: 1px 1px 5px 5px; }
</style>
